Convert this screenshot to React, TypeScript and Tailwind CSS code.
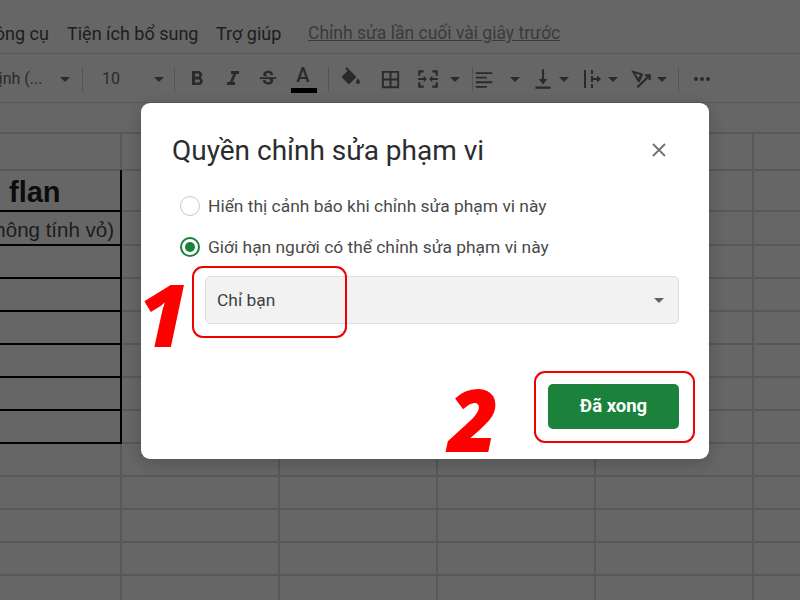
const Caret = ({ className = "" }: { className?: string }) => (
  <svg width="10" height="5" viewBox="0 0 10 5" className={`shrink-0 ${className}`}>
    <path d="M0 0h10L5 5z" fill="currentColor" />
  </svg>
);

const Sep = () => <div className="h-[25px] w-px shrink-0 bg-[#555]" />;

const Icon = ({ d, size = 24, w, className = "" }: { d: string; size?: number; w: number; className?: string }) => (
  <div className={`flex shrink-0 justify-center ${className}`} style={{ width: w }}>
    <svg width={size} height={size} viewBox="0 0 24 24" fill="currentColor">
      <path d={d} />
    </svg>
  </div>
);

const bold =
  "M15.6 10.79c.97-.67 1.65-1.77 1.65-2.79 0-2.26-1.75-4-4-4H7v14h7.04c2.09 0 3.71-1.7 3.71-3.79 0-1.52-.86-2.82-2.15-3.42zM10 6.5h3c.83 0 1.5.67 1.5 1.5s-.67 1.5-1.5 1.5h-3v-3zm3.5 9H10v-3h3.5c.83 0 1.5.67 1.5 1.5s-.67 1.5-1.5 1.5z";
const italic = "M10 4v3h2.21l-3.42 8H6v3h8v-3h-2.21l3.42-8H18V4z";
const strike =
  "M6.85 7.08C6.85 4.37 9.45 3 12.24 3c1.64 0 3 .49 3.9 1.28.77.65 1.46 1.73 1.46 3.24h-3.01c0-.31-.05-.59-.15-.85-.29-.86-1.2-1.28-2.25-1.28-1.86 0-2.34 1.02-2.34 1.7 0 .48.25.88.74 1.21.38.25.77.48 1.41.7H7.39c-.21-.34-.54-.89-.54-1.92zM21 12v-2H3v2h9.62c1.15.45 1.96.75 1.96 1.97 0 1-.81 1.67-2.28 1.67-1.54 0-2.93-.54-2.93-2.51H6.4c0 .55.08 1.13.24 1.58.81 2.29 3.29 3.3 5.67 3.3 2.27 0 5.3-.89 5.3-4.05 0-.3-.01-1.16-.48-1.96H21z";
const fill =
  "M16.56 8.94L7.62 0 6.21 1.41l2.38 2.38-5.15 5.15c-.59.59-.59 1.54 0 2.12l5.5 5.5c.29.29.68.44 1.06.44s.77-.15 1.06-.44l5.5-5.5c.59-.58.59-1.53 0-2.12zM19 11.5s-2 2.17-2 3.5c0 1.1.9 2 2 2s2-.9 2-2c0-1.33-2-3.5-2-3.5z";
const borders = "M3 3v18h18V3H3zm8 16H5v-6h6v6zm0-8H5V5h6v6zm8 8h-6v-6h6v6zm0-8h-6V5h6v6z";
const merge =
  "M3 4h5v2H5v3H3V4zm13 0h5v5h-2V6h-3V4zM3 15h2v3h3v2H3v-5zm16 0h2v5h-5v-2h3v-3zM3 11h5V9l3 3-3 3v-2H3v-2zm18 0v2h-5v2l-3-3 3-3v2h5z";
const align = "M3 4h18v2H3V4zm0 5h12v2H3V9zm0 5h18v2H3v-2zm0 5h12v2H3v-2z";
const valign = "M5 19h14v2H5v-2zM11 3h2v9h3l-4 5-4-5h3V3z";
const wrap =
  "M4 3h2v18H4V3zm7 0h2v4h-2V3zm0 6h2v2h4V8.5l4 3.5-4 3.5V13h-4v2h-2V9zm0 8h2v4h-2v-4z";
const rotate =
  "M3 4l9 2.5 2 1.3-3.4 7.4-1.8-1.2L3 4zm3.6 2.9l2.9 4.4 1.7-3.2-4.6-1.2zM21 7.5V13h-2v-2.2L9.4 20.4 8 19 17.6 9.5H15.500V7.500H21z";
const more = "M6 10a2 2 0 100 4 2 2 0 000-4zm6 0a2 2 0 100 4 2 2 0 000-4zm6 0a2 2 0 100 4 2 2 0 000-4z";

const rowHeights = [37, 41, 34, 33, 33, 33, 33, 33, 33, 33, 33, 33, 33, 33];

export default function App() {
  return (
    <div className="relative h-[600px] w-[800px] overflow-hidden bg-[#666666] font-['Roboto',sans-serif] text-[#1d1d1d]">
      {/* Menu bar */}
      <div className="flex h-[54px] items-center border-b border-[#585858] pt-[14px] text-[18px] whitespace-nowrap">
        <span className="ml-[-17px] w-[84px]">Công cụ</span>
        <span className="w-[149px]">Tiện ích bổ sung</span>
        <span className="w-[92px]">Trợ giúp</span>
        <span className="text-[17.5px] text-[#3a3a3a] underline">Chỉnh sửa lần cuối vài giây trước</span>
      </div>

      {/* Toolbar */}
      <div className="flex h-[49px] items-center border-b border-[#585858] pt-[2px] text-[#2a2a2a]">
        <span className="ml-[-12px] w-[72px] shrink-0 text-[16px] whitespace-nowrap">Định (...</span>
        <Caret />
        <div className="w-[12px] shrink-0" />
        <Sep />
        <span className="ml-[19px] w-[52px] shrink-0 text-[16px]">10</span>
        <Caret />
        <div className="w-[10px] shrink-0" />
        <Sep />
        <Icon d={bold} w={44} />
        <Icon d={italic} w={28} />
        <Icon d={strike} w={42} size={22} />
        <div className="relative flex h-[32px] w-[28px] shrink-0 flex-col items-center">
          <span className="text-[20px] leading-[24px] font-medium">A</span>
          <div className="absolute top-[25px] left-[2px] h-[5px] w-[26px] bg-black" />
        </div>
        <div className="w-[11px] shrink-0" />
        <Sep />
        <Icon d={fill} w={44} />
        <Icon d={borders} w={34} size={23} />
        <Icon d={merge} w={42} size={26} />
        <Caret className="ml-[1px]" />
        <div className="w-[12px] shrink-0" />
        <Sep />
        <Icon d={align} w={22} size={23} />
        <Caret className="ml-[15px]" />
        <Icon d={valign} w={36} size={26} className="ml-[5px]" />
        <Caret className="ml-[-2px]" />
        <Icon d={wrap} w={36} className="ml-[5px]" />
        <Caret className="ml-[-2px]" />
        <Icon d={rotate} w={36} size={26} className="ml-[5px]" />
        <Caret className="ml-[-2px]" />
        <div className="w-[11px] shrink-0" />
        <Sep />
        <Icon d={more} w={46} />
      </div>

      {/* Sheet */}
      <div className="h-[29px]" />
      <div className="border-t-2 border-[#585858]">
        {rowHeights.map((h, r) => (
          <div
            key={r}
            className="grid grid-cols-[122px_158px_158px_158px_158px_46px] border-b-2 border-[#585858]"
            style={{ height: h }}
          >
            {[0, 1, 2, 3, 4, 5].map((c) => (
              <div key={c} className={c < 5 ? "border-r-2 border-[#585858]" : ""} />
            ))}
          </div>
        ))}
      </div>

      {/* Table with black borders on top of the grid */}
      <div className="absolute top-[170px] left-0 w-[122px] border-r-2 border-black">
        <div className="flex h-[42px] items-center border-b-2 border-black pt-[5px] pl-[9px] font-['Liberation_Sans',sans-serif] text-[29px] font-bold text-[#0c0c0c]">
          flan
        </div>
        <div className="flex h-[34px] items-center justify-end overflow-hidden border-b-2 border-black pt-[5px] pr-[6px] font-['Liberation_Sans',sans-serif] text-[20.5px] whitespace-nowrap text-[#1c1c1c]">
          (không tính vỏ)
        </div>
        {[0, 1, 2, 3, 4, 5].map((i) => (
          <div key={i} className="h-[33px] border-b-2 border-black" />
        ))}
      </div>

      {/* Dialog */}
      <div className="absolute top-[103px] left-[141px] flex h-[356px] w-[568px] flex-col rounded-[9px] bg-white shadow-[0_4px_16px_rgba(0,0,0,0.2)]">
        <div className="flex items-center justify-between pt-[29px] pr-[40px] pl-[31px]">
          <h2 className="text-[28px] leading-[38px] font-normal whitespace-nowrap text-[#2a2c30]">
            Quyền chỉnh sửa phạm vi
          </h2>
          <svg width="20" height="20" viewBox="0 0 20 20" className="mt-[-2px] text-[#6f7275]">
            <path d="M4 4l12 12M16 4L4 16" stroke="currentColor" strokeWidth="1.8" fill="none" />
          </svg>
        </div>
        <div className="mt-[25px] flex flex-col gap-[19px] pl-[39px] text-[17.4px] leading-[22px] text-[#4a4a4a]">
          <div className="flex items-center gap-[8px]">
            <div className="h-[20px] w-[20px] rounded-full border-[1.5px] border-[#c8c8c8]" />
            <span>Hiển thị cảnh báo khi chỉnh sửa phạm vi này</span>
          </div>
          <div className="flex items-center gap-[8px]">
            <div className="flex h-[20px] w-[20px] items-center justify-center rounded-full border-2 border-[#188038]">
              <div className="h-[10px] w-[10px] rounded-full bg-[#188038]" />
            </div>
            <span>Giới hạn người có thể chỉnh sửa phạm vi này</span>
          </div>
        </div>
        <div className="mt-[18px] mr-[30px] ml-[64px] flex h-[48px] items-center justify-between rounded-[5px] border border-[#dedede] bg-[#f2f2f2] pr-[14px] pl-[11px] text-[17.4px] text-[#3c4043]">
          <span>Chỉ bạn</span>
          <Caret className="text-[#5f6368]" />
        </div>
        <div className="mt-[60px] mr-[30px] flex justify-end">
          <button className="h-[45px] w-[131px] rounded-[5px] bg-[#1a823b] text-[18.5px] font-bold text-white">
            Đã xong
          </button>
        </div>
      </div>

      {/* Red annotations */}
      <div className="absolute top-[266px] left-[192px] h-[72px] w-[155px] rounded-[11px] border-2 border-[#f00000]" />
      <div className="absolute top-[371px] left-[534px] h-[72px] w-[161px] rounded-[11px] border-2 border-[#f00000]" />
      <span className="absolute top-[263px] left-[138px] font-['Open_Sans',sans-serif] text-[87px] leading-[100px] font-extrabold text-[#fe0000] italic">
        1
      </span>
      <span className="absolute top-[368px] left-[448px] font-['Open_Sans',sans-serif] text-[87px] leading-[100px] font-extrabold text-[#fe0000] italic">
        2
      </span>
    </div>
  );
}
